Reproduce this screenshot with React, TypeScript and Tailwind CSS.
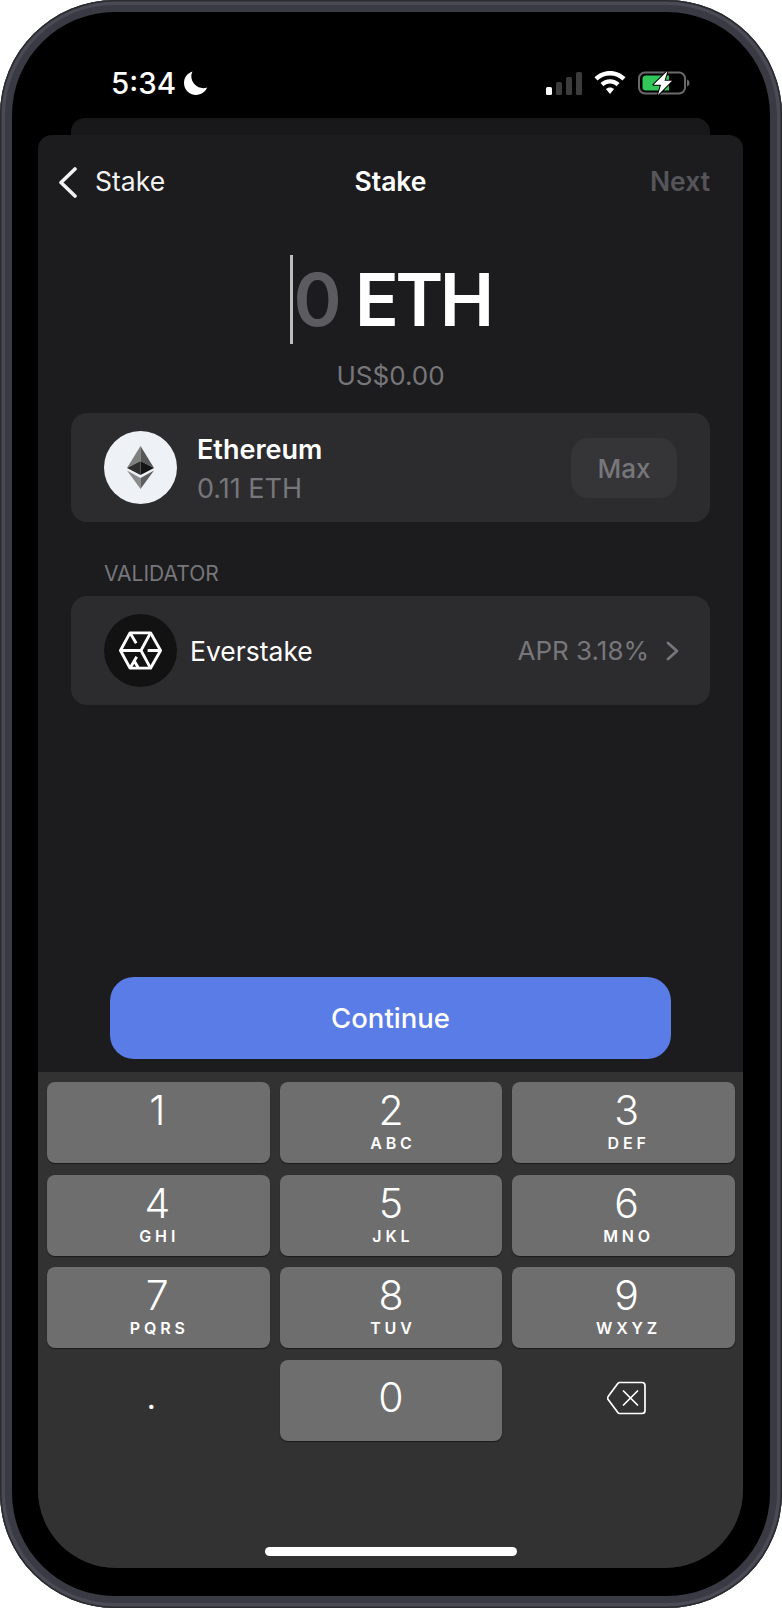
import React from 'react';

const keys = [
  { n: '1', l: '', cls: 'pr-[2px]' },
  { n: '2', l: 'ABC', cls: '' },
  { n: '3', l: 'DEF', cls: 'pl-[6px]' },
  { n: '4', l: 'GHI', cls: 'pr-[2px]' },
  { n: '5', l: 'JKL', cls: '' },
  { n: '6', l: 'MNO', cls: 'pl-[6px]' },
  { n: '7', l: 'PQRS', cls: 'pr-[2px]' },
  { n: '8', l: 'TUV', cls: '' },
  { n: '9', l: 'WXYZ', cls: 'pl-[6px]' },
];

const Key: React.FC<{ n: string; l: string; cls: string }> = ({ n, l, cls }) => (
  <div className={`h-[81px] rounded-[8px] bg-[#6e6e6e] shadow-[0_1px_1px_#1a1a1a] flex flex-col items-center pt-[4px] text-white ${cls}`}>
    <span className="text-[41px] leading-[48px] font-light">{n}</span>
    <span className="text-[16px] leading-[19px] font-semibold tracking-[0.24em] mr-[-0.24em]">{l}</span>
  </div>
);

const StatusBar: React.FC = () => (
  <div className="h-[106px] flex items-start justify-between pt-[59px] pl-[73px] pr-[53px] text-white">
    <div className="flex items-center gap-[8px]">
      <span className="text-[29.5px] leading-[24px] font-medium">5:34</span>
      <svg width="24" height="24" viewBox="0 0 24 24">
        <path d="M8.5 0.5C3.5 2 0 6.5 0 12c0 6.6 5.4 12 12 12 5 0 9.4-3 11.2-7.4-1.2.4-2.5.6-3.8.6C12.7 17.2 7.3 11.8 7.3 5.1c0-1.6.4-3.2 1.2-4.600z" fill="#fff" />
      </svg>
    </div>
    <div className="flex items-center gap-[12px] h-[24px]">
      <div className="flex items-end gap-[4px] h-[23px]">
        <div className="w-[6px] h-[8px] rounded-[1.5px] bg-white" />
        <div className="w-[6px] h-[13px] rounded-[1.5px] bg-[#3c3c3c]" />
        <div className="w-[6px] h-[18px] rounded-[1.5px] bg-[#3c3c3c]" />
        <div className="w-[6px] h-[23px] rounded-[1.5px] bg-[#3c3c3c]" />
      </div>
      <svg width="32" height="24" viewBox="0 0 32 24" fill="#fff">
        <path d="M16 0C10 0 4.5 2.4.5 6.3l3 3.2C6.7 6.3 11.1 4.4 16 4.4s9.3 1.9 12.5 5.1l3-3.2C27.5 2.4 22 0 16 0z" />
        <path d="M16 8.2c-3.7 0-7 1.5-9.5 3.9l3 3.2c1.7-1.6 4-2.7 6.5-2.700s4.8 1.100 6.500 2.700l3-3.200C23 9.700 19.700 8.200 16 8.200z" />
        <path d="M16 16.4c-1.5 0-3 .6-4.100 1.600L16 23l4.100-5c-1.100-1-2.600-1.600-4.100-1.600z" />
      </svg>
      <svg width="52" height="24" viewBox="0 0 52 24">
        <rect x="1" y="1.5" width="46" height="21" rx="6" fill="none" stroke="#6a6a6a" strokeWidth="2" />
        <path d="M4.5 8A3.500 3.500 0 0 1 8 4.500h23v15H8A3.500 3.500 0 0 1 4.500 16z" fill="#33c659" />
        <path d="M49 8.500c1.500.4 2.500 1.900 2.500 3.500s-1 3.100-2.500 3.500z" fill="#6a6a6a" />
        <path d="M29.500 0L15.500 13.800h7.500L20 24 34 9.800h-7.500z" fill="#fff" stroke="#000" strokeWidth="2" strokeLinejoin="round" paintOrder="stroke" />
      </svg>
    </div>
  </div>
);

const EthLogo: React.FC = () => (
  <svg width="27" height="43" viewBox="0 0 27 43">
    <polygon points="13.5,0 0,22 13.5,15" fill="#7f7f7f" />
    <polygon points="13.5,0 27,22 13.5,15" fill="#565656" />
    <polygon points="0,22 13.5,15 13.5,29" fill="#2e2e2e" />
    <polygon points="27,22 13.5,15 13.5,29" fill="#141414" />
    <polygon points="0,24.5 13.5,32 13.5,43" fill="#8b8b8b" />
    <polygon points="27,24.5 13.5,32 13.5,43" fill="#5e5e5e" />
  </svg>
);

const EverstakeLogo: React.FC = () => (
  <svg width="43" height="41" viewBox="0 0 45 42" fill="none" stroke="#fff" strokeWidth="3" strokeLinejoin="round">
    <path d="M11.5 2.5H33L43.5 21 33 39.5H11.5L1.5 21z" />
    <path d="M1.5 21H23M33 2.5L23 21l10 18.5M43.5 21H30M11.5 2.5L18 13.5M11.5 39.5L18.5 27.5M20.5 39.5L16 32" />
  </svg>
);

export default function App() {
  return (
    <div className="w-[782px] h-[1608px] bg-white font-['Inter',sans-serif]">
      <div className="h-full rounded-[115px] p-[12px] bg-[#3a3a44] shadow-[inset_0_0_0_1.5px_#2a2a30,inset_0_0_0_5px_#4a4a55]">
        <div className="h-full rounded-[103px] bg-black flex flex-col pl-[26px] pr-[27px] pb-[28px]">
          <StatusBar />
          <div className="mx-[33px] h-[17px] rounded-t-[14px] bg-[#18181a]" />
          <div className="flex-1 min-h-0 flex flex-col rounded-t-[14px] rounded-b-[78px] bg-[#1c1c1e] overflow-hidden">
            <div className="flex-1 flex flex-col px-[33px]">
              <div className="relative h-[94px] flex items-center justify-between text-[26.5px]">
                <div className="flex items-center gap-[18px] ml-[-12px] text-[#f2f2f2]">
                  <svg width="18" height="31" viewBox="0 0 18 31" fill="none" stroke="#f2f2f2" strokeWidth="3.6" strokeLinecap="round" strokeLinejoin="round">
                    <path d="M16 2L2 15.5 16 29" />
                  </svg>
                  <span>Stake</span>
                </div>
                <span className="absolute left-0 right-0 text-center font-semibold text-white">Stake</span>
                <span className="font-semibold text-[#55555a]">Next</span>
              </div>
              <div className="flex items-center justify-center h-[90px] mt-[25px] text-[73px] font-semibold leading-none">
                <div className="w-[3px] h-[89px] bg-[#bdbdbd]" />
                <span className="text-[#5c5c60]">0</span>
                <span className="text-white ml-[13px] tracking-[-0.05em]">ETH</span>
              </div>
              <div className="text-center text-[26px] leading-[32px] mt-[16px] text-[#77777b]">US$0.00</div>

              <div className="mt-[21px] h-[109px] rounded-[16px] bg-[#2c2c2e] flex items-center pl-[33px] pr-[33px]">
                <div className="w-[73px] h-[73px] rounded-full bg-[#eef1f6] flex items-center justify-center">
                  <EthLogo />
                </div>
                <div className="ml-[20px] flex-1 pt-[4px]">
                  <div className="text-[27px] leading-[32px] font-semibold text-white">Ethereum</div>
                  <div className="text-[27px] leading-[32px] mt-[7px] text-[#77777b]">0.11 ETH</div>
                </div>
                <div className="w-[106px] h-[60px] pt-[1px] rounded-[18px] bg-[#353537] flex items-center justify-center text-[26px] font-medium text-[#77777b]">Max</div>
              </div>

              <div className="mt-[39px] ml-[33px] text-[21px] leading-[26px] text-[#77777b]">VALIDATOR</div>
              <div className="mt-[9px] h-[109px] rounded-[16px] bg-[#2c2c2e] flex items-center pl-[33px] pr-[31px]">
                <div className="w-[73px] h-[73px] rounded-full bg-[#121212] flex items-center justify-center">
                  <EverstakeLogo />
                </div>
                <span className="ml-[13px] flex-1 pt-[3px] text-[26.5px] text-white">Everstake</span>
                <span className="text-[26px] text-[#77777b]">APR 3.18%</span>
                <svg className="ml-[17px]" width="13" height="20" viewBox="0 0 13 20" fill="none" stroke="#77777b" strokeWidth="2.8" strokeLinecap="round" strokeLinejoin="round">
                  <path d="M2 2l9 8-9 8" />
                </svg>
              </div>

              <div className="mt-auto mb-[13px] mx-[39px] h-[82px] pt-[2px] rounded-[24px] bg-[#5a7ce6] flex items-center justify-center text-[27.5px] font-medium text-white">Continue</div>
            </div>

            <div className="relative h-[496px] bg-[#323232] pt-[10px] pl-[9px] pr-[8px]">
              <div className="grid grid-cols-3 gap-x-[10px] gap-y-[11.5px]">
                {keys.map(k => (
                  <Key key={k.n} n={k.n} l={k.l} cls={k.cls} />
                ))}
                <div className="h-[81px] pr-[14px] flex items-center justify-center text-[27px] font-semibold text-white">.</div>
                <div className="h-[81px] pb-[4px] rounded-[8px] bg-[#6e6e6e] shadow-[0_1px_1px_#1a1a1a] flex items-center justify-center text-[41px] font-light text-white">0</div>
                <div className="h-[81px] pl-[6px] pb-[4px] flex items-center justify-center">
                  <svg width="40" height="34" viewBox="0 0 40 34" fill="none" stroke="#fff" strokeWidth="1.7" strokeLinejoin="round" strokeLinecap="round">
                    <path d="M12.5 1.5H35a3 3 0 0 1 3 3v25a3 3 0 0 1-3 3H12.5a2 2 0 0 1-1.5-.7L1.5 19a3 3 0 0 1 0-4L11 2.2a2 2 0 0 1 1.5-.7z" />
                    <path d="M16.5 10l14 14M30.5 10l-14 14" />
                  </svg>
                </div>
              </div>
              <div className="absolute left-[227px] bottom-[12px] w-[252px] h-[9px] rounded-full bg-white" />
            </div>
          </div>
        </div>
      </div>
    </div>
  );
}
